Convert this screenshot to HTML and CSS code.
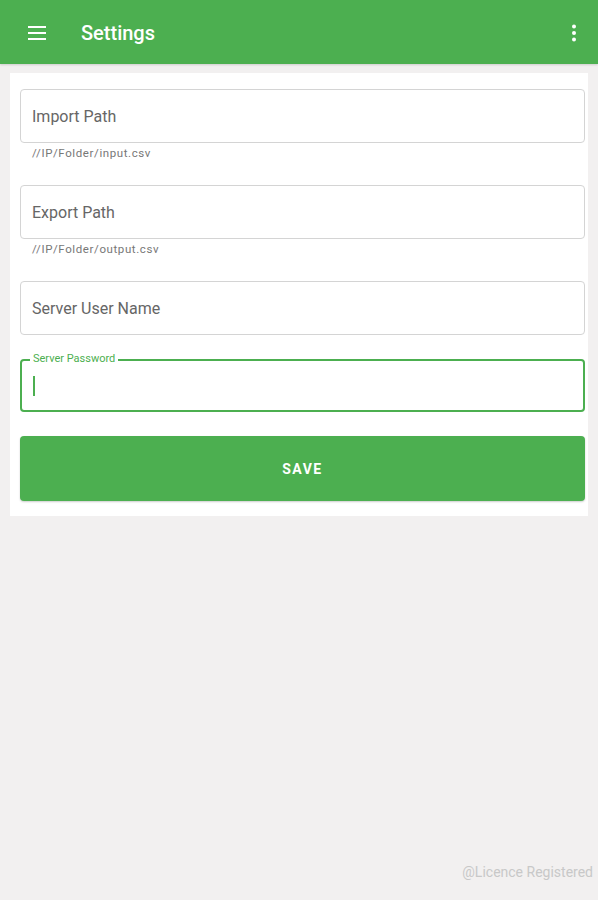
FILE: index.html
```html
<!DOCTYPE html>
<html lang="en">
<head>
    <meta charset="UTF-8" />
    <title>Settings</title>
    <link rel="stylesheet" href="styles.css">
</head>
<body>
<div class="appbar">
    <svg class="menu-icon" width="24" height="24" viewBox="0 0 24 24">
        <path d="M3 6h18M3 12h18M3 18h18" stroke="#fff" stroke-width="2.2" fill="none"/>
    </svg>
    <h1>Settings</h1>
    <svg class="more-icon" width="24" height="24" viewBox="0 0 24 24">
        <circle cx="12" cy="5.5" r="2" fill="#fff"/>
        <circle cx="12" cy="12" r="2" fill="#fff"/>
        <circle cx="12" cy="18.5" r="2" fill="#fff"/>
    </svg>
</div>

<div class="card">
    <div class="field">
        <div class="box">Import Path</div>
        <div class="hint">//IP/Folder/input.csv</div>
    </div>
    <div class="field">
        <div class="box">Export Path</div>
        <div class="hint">//IP/Folder/output.csv</div>
    </div>
    <div class="field">
        <div class="box">Server User Name</div>
    </div>
    <div class="field">
        <div class="box focused">
            <span class="float-label">Server Password</span>
            <span class="caret"></span>
        </div>
    </div>
    <button type="button">SAVE</button>
</div>

<div class="footer">@Licence Registered</div>
</body>
</html>
```

FILE: styles.css
```css
body {
    margin: 0;
    font-family: Roboto, "Noto Sans", sans-serif;
    background: #f2f0f0;
    height: 900px;
    position: relative;
}
.appbar {
    height: 64px;
    box-sizing: border-box;
    padding: 2px 12px 0 25px;
    background: #4caf50;
    display: flex;
    align-items: center;
    box-shadow: 0 1px 2px rgba(0,0,0,0.15);
}
.appbar h1 {
    margin: 0 0 0 32px;
    color: #fff;
    font-size: 20px;
    font-weight: 500;
    flex: 1;
}
.more-icon {
    margin-top: -1px;
}
.card {
    margin: 9px 10px 0 10px;
    background: #fff;
    padding: 16px 3px 15px 10px;
}
.field {
    margin-bottom: 12px;
}
.box {
    height: 52px;
    border: 1px solid #d4d4d4;
    border-radius: 4px;
    display: flex;
    align-items: center;
    padding-left: 11px;
    color: #666;
    font-size: 16px;
    position: relative;
}
.hint {
    font-size: 11.5px;
    color: #777;
    padding: 3px 0 0 12px;
    letter-spacing: 0.6px;
    height: 27px;
}
.box.focused {
    border: 2px solid #4caf50;
    height: 49px;
    padding-left: 11px;
    margin-top: 24px;
}
.float-label {
    position: absolute;
    top: -9px;
    left: 8px;
    background: #fff;
    padding: 0 3px;
    font-size: 11px;
    color: #4caf50;
}
.caret {
    width: 2px;
    height: 20px;
    background: #4caf50;
}
button {
    width: 100%;
    height: 65px;
    margin-top: 12px;
    background: #4caf50;
    border: none;
    border-radius: 4px;
    color: #fff;
    font-family: Roboto, sans-serif;
    font-weight: bold;
    font-size: 14px;
    letter-spacing: 1.5px;
    box-shadow: 0 1px 2px rgba(0,0,0,0.2);
}
.footer {
    position: absolute;
    right: 5px;
    bottom: 20px;
    color: #c8c8c8;
    font-size: 14px;
}
```
